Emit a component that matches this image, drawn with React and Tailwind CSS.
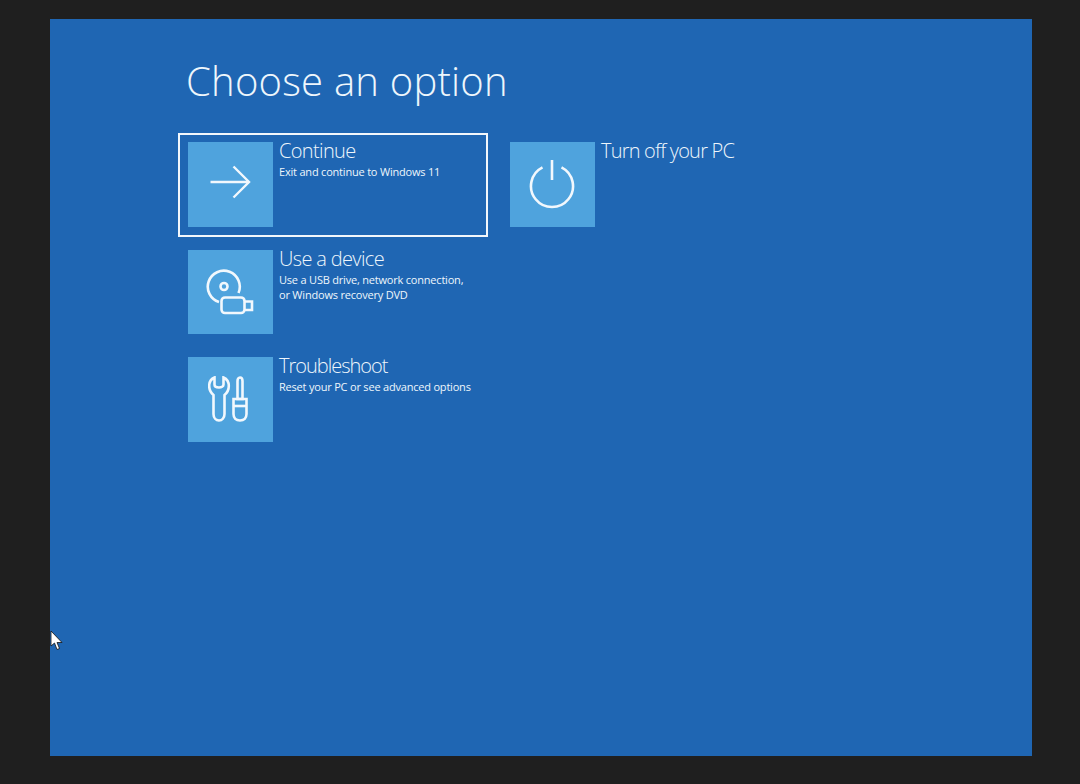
import React from 'react';

const font = { fontFamily: '"Open Sans", "Liberation Sans", sans-serif' };

const ArrowIcon = () => (
  <svg className="-mt-[4px]" width="44" height="36" viewBox="0 0 44 36" fill="none" stroke="currentColor" strokeWidth="2.4">
    <path d="M2.500 18H41" />
    <path d="M25.500 2.500L41 18L25.500 33.500" />
  </svg>
);

const PowerIcon = () => (
  <svg width="46" height="50" viewBox="0 0 46 50" fill="none" stroke="currentColor" strokeWidth="2.6">
    <path d="M23 1V21" />
    <path d="M13.500 8.300A21 21 0 1 0 32.500 8.300" />
  </svg>
);

const DeviceIcon = () => (
  <svg width="48" height="46" viewBox="0 0 48 46" fill="none" stroke="currentColor" strokeWidth="2.600">
    <path d="M13 33A16 16 0 1 1 32.500 24" />
    <circle cx="18" cy="17.500" r="3.500" />
    <rect x="15.500" y="28.500" width="23" height="15.500" rx="3.500" />
    <path d="M38.500 32.500H46V41H38.500" />
  </svg>
);

const ToolsIcon = () => (
  <svg className="-ml-[4px]" width="40" height="46" viewBox="0 0 40 46" fill="none" stroke="currentColor" strokeWidth="2.600">
    <path d="M6.500 1.500C3 3 1.200 6.500 1.200 10C1.200 14 3 17 5.500 19V38C5.500 42 8 44.500 11 44.500C14 44.500 16.500 42 16.500 38V19C19 17 20.800 14 20.800 10C20.800 6.500 19 3 15.500 1.500V8.500C15.500 10.500 13.500 11.500 11 11.500C8.500 11.500 6.500 10.500 6.500 8.500Z" />
    <path d="M32 1.500C33.500 1.500 34.500 3 34.500 5V23H29.500V5C29.500 3 30.500 1.500 32 1.500Z" />
    <path d="M25.500 23H38.500V38C38.500 42 36 44.500 32 44.500C28 44.500 25.500 42 25.500 38Z" />
    <path d="M25.500 30H38.500" />
  </svg>
);

const CursorIcon = () => (
  <svg width="13" height="20" viewBox="0 0 13 20">
    <path d="M1 0V15L4.500 12L7 18.500L9.500 17.500L7 11.500H12Z" fill="#fff" stroke="#111" strokeWidth="0.8" />
  </svg>
);

const Option = ({ icon, title, lines, selected, titleClass }) => (
  <div className={`flex h-[103.500px] w-[310px] gap-[6.500px] border-2 px-[8px] py-[7px] ${selected ? 'border-[#f2f7fc]' : 'border-transparent'}`}>
    <div className="flex h-[84.500px] w-[84.500px] shrink-0 items-center justify-center bg-[#4fa3dd] text-[#f2f8fd]">
      {icon}
    </div>
    <div className="text-[#eef6fc]">
      <div className={`text-[20px] font-light leading-[17px] ${titleClass}`}>{title}</div>
      {lines && (
        <div className="mt-[5px] text-[11px] leading-[15.500px] tracking-[-0.2px]">
          {lines.map((line) => (
            <div key={line}>{line}</div>
          ))}
        </div>
      )}
    </div>
  </div>
);

export default function App() {
  return (
    <div className="h-[784px] w-[1080px] overflow-hidden bg-[#1f1f1f] pl-[50px] pt-[19px]" style={font}>
      <div className="relative h-[737px] w-[982px] bg-[#1f66b3] pl-[128px] pt-[34px]">
        <h1 className="ml-[8px] h-[80px] text-[40px] font-light leading-[56px] tracking-[0.22px] text-[#eef6fc]">
          Choose an option
        </h1>
        <div className="flex gap-[12px]">
          <div className="flex flex-col gap-[4px]">
            <Option
              selected
              icon={<ArrowIcon />}
              title="Continue"
              titleClass="tracking-[-0.65px]"
              lines={['Exit and continue to Windows 11']}
            />
            <Option
              icon={<DeviceIcon />}
              title="Use a device"
              titleClass="tracking-[-0.65px]"
              lines={['Use a USB drive, network connection,', 'or Windows recovery DVD']}
            />
            <Option
              icon={<ToolsIcon />}
              title="Troubleshoot"
              titleClass="tracking-[-1px]"
              lines={['Reset your PC or see advanced options']}
            />
          </div>
          <div>
            <Option icon={<PowerIcon />} title="Turn off your PC" titleClass="tracking-[-0.8px]" />
          </div>
        </div>
        <div className="absolute left-0 top-[612px]">
          <CursorIcon />
        </div>
      </div>
    </div>
  );
}
